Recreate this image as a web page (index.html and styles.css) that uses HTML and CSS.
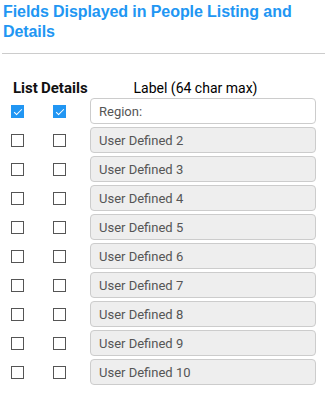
FILE: index.html
```html
<!DOCTYPE html>
<html lang="en">

<head>
    <meta charset="UTF-8">
    <meta name="viewport" content="width=device-width, initial-scale=1.0">
    <title>Fields Displayed in People Listing and Details</title>
    <link rel="stylesheet" href="styles.css">
</head>

<body>
    <h3 class="title">Fields Displayed in People Listing and Details</h3>
    <hr class="divider">

    <div class="fields">
        <div class="field-head">
            <span class="head-list">List</span>
            <span class="head-details">Details</span>
            <span class="head-label">Label (64 char max)</span>
        </div>
        <div class="field-row">
            <span class="cell-list"><input type="checkbox" checked></span>
            <span class="cell-details"><input type="checkbox" checked></span>
            <input class="label-input" type="text" value="Region:">
        </div>
        <div class="field-row">
            <span class="cell-list"><input type="checkbox"></span>
            <span class="cell-details"><input type="checkbox"></span>
            <input class="label-input" type="text" value="User Defined 2" disabled>
        </div>
        <div class="field-row">
            <span class="cell-list"><input type="checkbox"></span>
            <span class="cell-details"><input type="checkbox"></span>
            <input class="label-input" type="text" value="User Defined 3" disabled>
        </div>
        <div class="field-row">
            <span class="cell-list"><input type="checkbox"></span>
            <span class="cell-details"><input type="checkbox"></span>
            <input class="label-input" type="text" value="User Defined 4" disabled>
        </div>
        <div class="field-row">
            <span class="cell-list"><input type="checkbox"></span>
            <span class="cell-details"><input type="checkbox"></span>
            <input class="label-input" type="text" value="User Defined 5" disabled>
        </div>
        <div class="field-row">
            <span class="cell-list"><input type="checkbox"></span>
            <span class="cell-details"><input type="checkbox"></span>
            <input class="label-input" type="text" value="User Defined 6" disabled>
        </div>
        <div class="field-row">
            <span class="cell-list"><input type="checkbox"></span>
            <span class="cell-details"><input type="checkbox"></span>
            <input class="label-input" type="text" value="User Defined 7" disabled>
        </div>
        <div class="field-row">
            <span class="cell-list"><input type="checkbox"></span>
            <span class="cell-details"><input type="checkbox"></span>
            <input class="label-input" type="text" value="User Defined 8" disabled>
        </div>
        <div class="field-row">
            <span class="cell-list"><input type="checkbox"></span>
            <span class="cell-details"><input type="checkbox"></span>
            <input class="label-input" type="text" value="User Defined 9" disabled>
        </div>
        <div class="field-row">
            <span class="cell-list"><input type="checkbox"></span>
            <span class="cell-details"><input type="checkbox"></span>
            <input class="label-input" type="text" value="User Defined 10" disabled>
        </div>
    </div>
</body>

</html>
```

FILE: styles.css
```css
body {
    font-family: Roboto, "Liberation Sans", Arial, sans-serif;
    background-color: #fff;
    margin: 0;
    padding: 2px 1px 0 2px;
}

.title {
    font-family: "Liberation Sans", Arial, sans-serif;
    font-size: 16px;
    line-height: 20px;
    font-weight: bold;
    letter-spacing: -0.08px;
    color: #2196F3;
    margin: 0;
    padding-left: 1px;
}

.divider {
    border: none;
    border-top: 1px solid #ccc;
    margin: 11px 0 0 0;
}

.fields {
    display: flex;
    flex-direction: column;
    gap: 3px;
    padding-top: 24px;
}

.field-head,
.field-row {
    display: grid;
    grid-template-columns: 38px 50px 226px;
    align-items: center;
}

.field-head {
    font-size: 14px;
    line-height: 20px;
    color: #111;
    margin-bottom: -3px;
}

.head-list {
    font-size: 15px;
    font-weight: bold;
    padding-left: 11px;
}

.head-details {
    font-size: 15px;
    font-weight: bold;
    padding-left: 1px;
}

.head-label {
    text-align: center;
    padding-right: 15px;
    font-size: 14px;
    color: #000;
}

.cell-list {
    padding-left: 9px;
}

.cell-details {
    padding-left: 13px;
}

.field-row input[type="checkbox"] {
    appearance: none;
    -webkit-appearance: none;
    display: block;
    position: relative;
    width: 13px;
    height: 13px;
    margin: 0;
    border: 1px solid #555;
    background-color: #fff;
}

.field-row input[type="checkbox"]:checked {
    background-color: #2196F3;
    border-color: #2196F3;
}

/* small white tick */
.field-row input[type="checkbox"]:checked::after {
    content: "";
    position: absolute;
    left: 2px;
    top: 1px;
    width: 7px;
    height: 3px;
    border-left: 1px solid #fff;
    border-bottom: 1px solid #fff;
    transform: translate(0, 2px) rotate(-45deg);
}

.label-input {
    box-sizing: border-box;
    width: 226px;
    height: 26px;
    padding: 0 8px;
    font-family: Roboto, "Liberation Sans", Arial, sans-serif;
    font-size: 13px;
    color: #555;
    border: 1px solid #ccc;
    border-radius: 4px;
    background-color: #fff;
    outline: none;
}

.label-input:disabled {
    background-color: #eee;
    color: #555;
}
```
